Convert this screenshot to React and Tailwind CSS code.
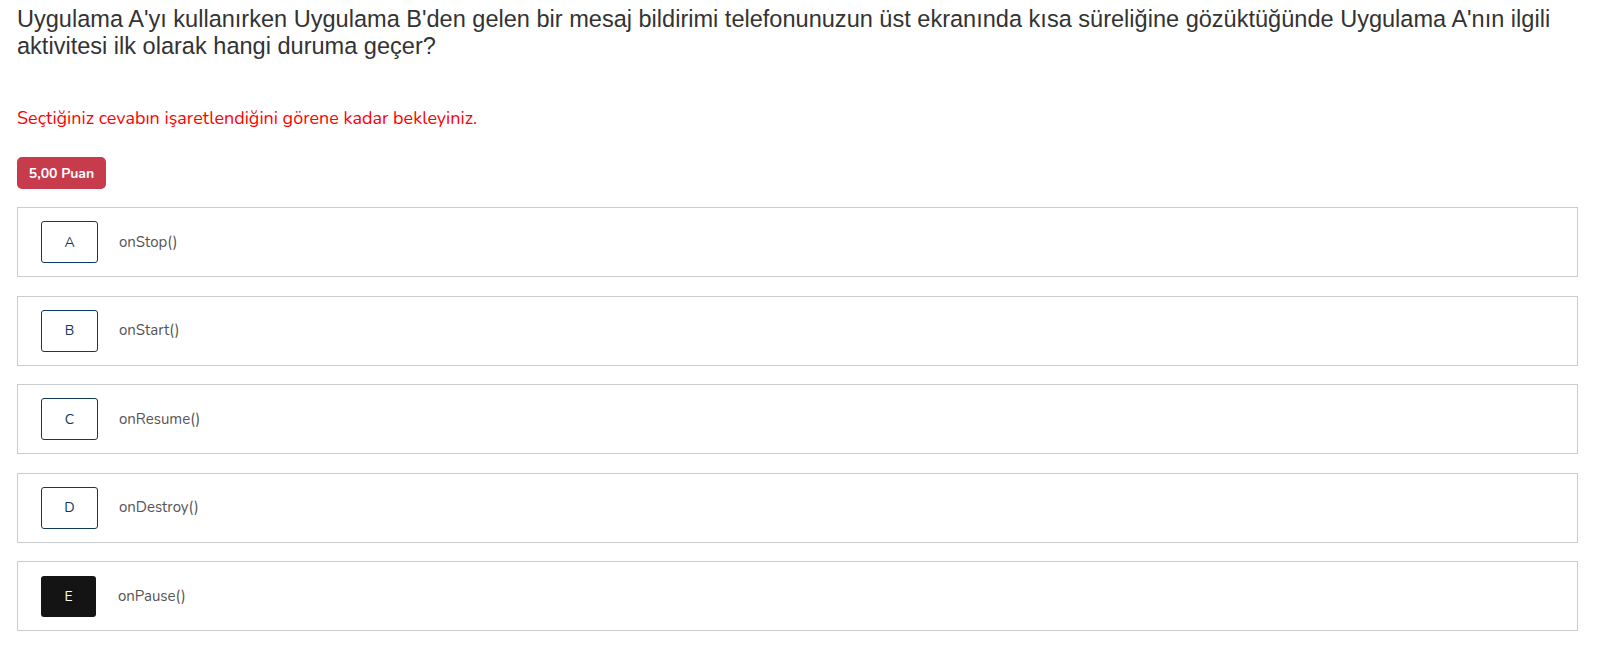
import React from "react";

const options = [
  { l: "A", t: "onStop()" },
  { l: "B", t: "onStart()" },
  { l: "C", t: "onResume()" },
  { l: "D", t: "onDestroy()" },
  { l: "E", t: "onPause()", selected: true },
];

export default function App() {
  return (
    <div className="w-[1602px] h-[668px] bg-white pl-[17px] pr-[24px] pt-[6px]">
      <div className="text-[23.55px] leading-[27px] text-[#333333] font-['Liberation_Sans',Arial,sans-serif]">
        Uygulama A'yı kullanırken Uygulama B'den gelen bir mesaj bildirimi telefonunuzun üst ekranında kısa süreliğine gözüktüğünde Uygulama A'nın ilgili aktivitesi ilk olarak hangi duruma geçer?
      </div>
      <div className="mt-[46px] text-[18px] leading-[24px] text-[#ff0000] font-['Nunito','Noto_Sans',sans-serif]">
        Seçtiğiniz cevabın işaretlendiğini görene kadar bekleyiniz.
      </div>
      <div className="mt-[27px] inline-flex items-center justify-center h-[32px] w-[89px] rounded-[5px] bg-[#c63c4c] text-white text-[14px] font-bold font-['Nunito','Noto_Sans',sans-serif]">
        5,00 Puan
      </div>
      <div className="mt-[18px] flex flex-col gap-[18.5px] font-['Nunito','Noto_Sans',sans-serif]">
        {options.map((o) => (
          <div key={o.l} className="h-[70px] border border-[#cccccc] flex items-center pl-[23px]">
            <div
              className={
                o.selected
                  ? "w-[55px] h-[41px] rounded-[3px] bg-[#141414] text-white flex items-center justify-center text-[14px]"
                  : "w-[57px] h-[42px] rounded-[3px] border border-[#0e3a5e] text-[#0e3a5e] flex items-center justify-center text-[14px]"
              }
            >
              {o.l}
            </div>
            <div className={(o.selected ? "ml-[22px]" : "ml-[21px]") + " text-[15px] text-[#555555]"}>{o.t}</div>
          </div>
        ))}
      </div>
    </div>
  );
}
